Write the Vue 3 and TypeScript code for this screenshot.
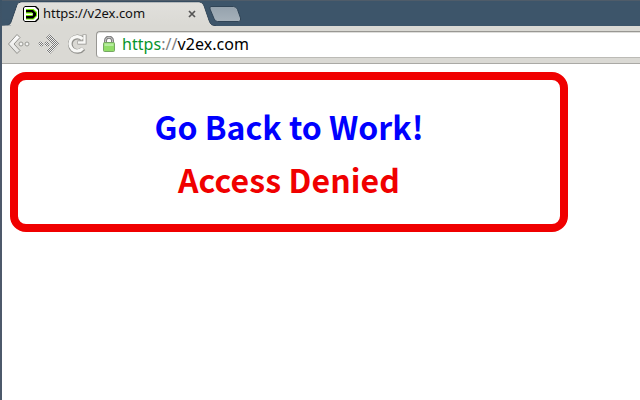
<script setup lang="ts">
const tabTitle: string = 'https://v2ex.com'
const scheme: string = 'https'
const host: string = 'v2ex.com'
</script>

<template>
  <div class="window">
    <header class="tabs">
      <svg class="tab-shapes" width="250" height="26" viewBox="0 0 250 26">
        <defs>
          <linearGradient id="tabFill" x1="0" y1="0" x2="0" y2="1">
            <stop offset="0" stop-color="#e1e0dc" />
            <stop offset="1" stop-color="#dad9d4" />
          </linearGradient>
          <linearGradient id="newTabFill" x1="0" y1="0" x2="0" y2="1">
            <stop offset="0" stop-color="#95a2ad" />
            <stop offset="1" stop-color="#a6b1ba" />
          </linearGradient>
        </defs>
        <path d="M0 26C5 26 8 25 9 22L15 5Q16 2 19 2H197Q200 2 201.500 5L207 21Q209 26 214 26Z" fill="url(#tabFill)" stroke="#304456" />
        <path d="M0 25.500H9L16 4Q17 2.500 20 2.500H197Q200 2.500 201.500 6L207 22Q208 25.500 212 26H0Z" fill="url(#tabFill)" />
        <path d="M0 20V25.500Q6 25.500 8 22L9 19Z" fill="#3d556a" />
        <path d="M209 6.500H231.500Q234.500 6.500 235.500 9.500L238.500 18Q239.500 21.500 236.500 21.500H215.500Q213 21.500 212 18.500L208 9Q207.500 6.500 209 6.500Z" fill="url(#newTabFill)" stroke="#304456" />
      </svg>
      <div class="tab">
        <svg class="favicon" width="16" height="16" viewBox="0 0 16 16">
          <path d="M2 0H13L16 3V13L13 16H2L0 14V2Z" fill="#000" />
          <path d="M2 1H12L15 4V12L12 15H2L1 14V2Z" fill="#fff" />
          <path d="M3 3H10.500L14 6V10L10.500 13.500H3V9.500H8V7H3Z" fill="#74ed00" />
          <path d="M3 4H10L13 7V9.500L10 12.500H3V10H9L10 9V7.500L9 6.500H3Z" fill="#000" />
          <path d="M1.500 7H9.500V9.500H1.500Z" fill="#fff" />
          <path d="M3 6.500H9V7.500H3ZM3 9H9V10H3Z" fill="#74ed00" />
        </svg>
        <span class="title">{{ tabTitle }}</span>
        <svg class="close" width="8" height="8" viewBox="0 0 8 8">
          <path d="M1 1L7 7M7 1L1 7" stroke="#555" stroke-width="1.700" />
        </svg>
      </div>
    </header>

    <nav class="toolbar">
      <svg class="controls" width="84" height="30" viewBox="1 1 84 30">
        <defs>
          <linearGradient id="iconFill" x1="0" y1="0" x2="0" y2="1">
            <stop offset="0" stop-color="#fff" />
            <stop offset="1" stop-color="#e2e2df" />
          </linearGradient>
          <pattern id="checker" width="2" height="2" patternUnits="userSpaceOnUse">
            <rect width="2" height="2" fill="#f1f1ef" />
            <rect width="1" height="1" fill="#777" />
            <rect x="1" y="1" width="1" height="1" fill="#777" />
          </pattern>
        </defs>
        <path d="M16 4.500L7.500 14L16 23.500L19 20.500L13 14L19 7.500Z" fill="url(#iconFill)" stroke="#92928e" stroke-linejoin="round" />
        <g fill="#f3f3f1" stroke="#999994">
          <circle cx="20" cy="14" r="2" />
          <circle cx="26" cy="14" r="2" />
        </g>
        <g fill="url(#checker)">
          <path d="M49 4L58.500 14L49 24L45 20.500L51.500 14L45 7.500Z" />
          <circle cx="40" cy="14" r="2.500" />
          <circle cx="46" cy="14" r="2.500" />
        </g>
        <g fill="none" stroke="#90908c">
          <path d="M81.500 9A7.200 7.200 0 1 0 82.300 18.500" stroke-width="4.800" />
          <path d="M83.500 4.500V12.500H76.500" stroke-width="4" />
        </g>
        <g fill="none" stroke="#f8f8f6">
          <path d="M81.500 9A7.200 7.200 0 1 0 81.800 18.200" stroke-width="3.200" />
          <path d="M83.500 5V12.500H77" stroke-width="2.400" />
        </g>
      </svg>
      <div class="address">
        <svg class="lock" width="12" height="16" viewBox="0 0 12 16">
          <path d="M2.500 8V4.500C2.500 .2 9.500 .2 9.500 4.500V8" fill="none" stroke="#808080" stroke-width="3" />
          <path d="M2.500 8V4.500C2.500 .2 9.500 .2 9.500 4.500V8" fill="none" stroke="#ccc" />
          <rect x=".5" y="6.500" width="11" height="9" rx="1" fill="#91de68" stroke="#76a664" />
          <path d="M1.500 7.500H10.500V10H1.500Z" fill="#b7eca0" />
        </svg>
        <span class="url"><span class="scheme">{{ scheme }}</span><span class="slashes">://</span>{{ host }}</span>
      </div>
    </nav>

    <main class="page">
      <section class="notice">
        <p class="work">Go Back to Work!</p>
        <p class="denied">Access Denied</p>
      </section>
    </main>
  </div>
</template>

<style>
body {
  overflow: hidden;
}
</style>

<style scoped>
.window {
  box-sizing: border-box;
  width: 640px;
  height: 400px;
  padding-left: 2px;
  display: flex;
  flex-direction: column;
  background: linear-gradient(#3b5367, #50596b 25%, #4c596b);
}
.tabs {
  box-sizing: border-box;
  position: relative;
  height: 26px;
  border-top: 1px solid #4f5c69;
  background: #3d556a;
}
.tab-shapes {
  position: absolute;
  left: 0;
  top: -1px;
}
.tab {
  position: relative;
  display: flex;
  align-items: center;
  height: 25px;
  padding-left: 21px;
}
.title {
  width: 145px;
  margin: 0 0 2px 4px;
  font: 13px/18px "Noto Sans", sans-serif;
  letter-spacing: -0.03px;
  color: #111;
}
.toolbar {
  box-sizing: border-box;
  display: flex;
  height: 38px;
  padding-top: 5px;
  border-bottom: 1px solid #aaa9a5;
  background: #dad9d4;
}
.controls {
  flex: none;
  width: 84px;
  margin-right: 10px;
  overflow: visible;
}
.address {
  box-sizing: border-box;
  display: flex;
  align-items: center;
  flex: 1;
  height: 27px;
  padding: 0 0 1px 6px;
  border: 1px solid #989793;
  border-right: 0;
  border-bottom-color: #bcbbb6;
  border-radius: 4px 0 0 4px;
  background: #fff;
  box-shadow: inset 0 1px #dededb;
}
.url {
  margin-left: 7px;
  font: 16px/22px "Noto Sans", sans-serif;
  letter-spacing: 0.05px;
  color: #000;
}
.scheme {
  color: #07952c;
}
.slashes {
  color: #808080;
}
.page {
  flex: 1;
  padding: 8px;
  background: #fff;
}
.notice {
  box-sizing: border-box;
  width: 558px;
  height: 160px;
  padding-top: 20px;
  border: 8px solid #f00000;
  border-radius: 16px;
  text-align: center;
  font: bold 32px/53px "Noto Sans CJK SC", sans-serif;
}
.notice p {
  margin: 0;
}
.work {
  color: #00f;
}
.denied {
  letter-spacing: 0.1px;
  color: #f00000;
}
</style>
